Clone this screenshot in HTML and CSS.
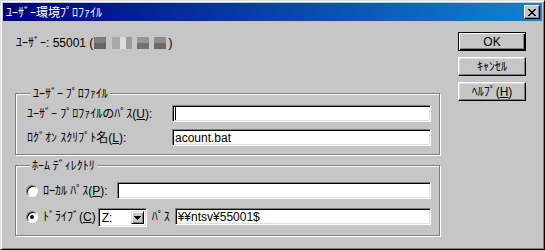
FILE: index.html
```html
<!DOCTYPE html>
<html lang="ja">
<head>
  <meta charset="UTF-8" />
  <title>ﾕｰｻﾞｰ環境ﾌﾟﾛﾌｧｲﾙ</title>
  <link rel="stylesheet" href="styles.css">
</head>
<body>
  <div class="window">
    <div class="titlebar">
      <span class="title">ﾕｰｻﾞｰ環境ﾌﾟﾛﾌｧｲﾙ</span>
      <span class="close-box">
        <svg width="8" height="7" viewBox="0 0 8 7" shape-rendering="crispEdges">
          <path d="M0 0h2v1h-2zM6 0h2v1h-2zM1 1h2v1h-2zM5 1h2v1h-2zM2 2h4v1h-4zM3 3h2v1h-2zM2 4h4v1h-4zM1 5h2v1h-2zM5 5h2v1h-2zM0 6h2v1h-2zM6 6h2v1h-2z" fill="#000"/>
        </svg>
      </span>
    </div>

    <div class="dialog">
      <div class="main">
        <div class="user-line">ﾕｰｻﾞｰ: 55001 (<span class="mask m1"></span><span class="mask m2"></span><span class="mask m3"></span><span class="mask m4"></span>)</div>

        <fieldset class="group profile">
          <legend>ﾕｰｻﾞｰ ﾌﾟﾛﾌｧｲﾙ</legend>
          <div class="row">
            <label class="label">ﾕｰｻﾞｰ ﾌﾟﾛﾌｧｲﾙのﾊﾟｽ(<u>U</u>):</label>
            <div class="field"><span class="caret"></span></div>
          </div>
          <div class="row">
            <label class="label">ﾛｸﾞｵﾝ ｽｸﾘﾌﾟﾄ名(<u>L</u>):</label>
            <div class="field">acount.bat</div>
          </div>
        </fieldset>

        <fieldset class="group home">
          <legend>ﾎｰﾑ ﾃﾞｨﾚｸﾄﾘ</legend>
          <div class="row">
            <span class="radio"></span>
            <label class="opt local-label">ﾛｰｶﾙ ﾊﾟｽ(<u>P</u>):</label>
            <div class="field"></div>
          </div>
          <div class="row">
            <span class="radio checked"></span>
            <label class="opt drive-label">ﾄﾞﾗｲﾌﾞ(<u>C</u>)</label>
            <div class="combo">
              <span class="combo-value">Z:</span>
              <span class="drop">
                <svg width="7" height="4" viewBox="0 0 7 4" shape-rendering="crispEdges">
                  <path d="M0 0h7v1h-7zM1 1h5v1h-5zM2 2h3v1h-3zM3 3h1v1h-1z" fill="#000"/>
                </svg>
              </span>
            </div>
            <label class="opt path-label">ﾊﾟｽ</label>
            <div class="field">¥¥ntsv¥55001$</div>
          </div>
        </fieldset>
      </div>

      <div class="buttons">
        <button class="btn default">OK</button>
        <button class="btn">ｷｬﾝｾﾙ</button>
        <button class="btn">ﾍﾙﾌﾟ(<u>H</u>)</button>
      </div>
    </div>
  </div>
</body>
</html>
```

FILE: styles.css
```css
body {
  margin: 0;
  font-family: "Liberation Sans", "Noto Sans CJK JP", sans-serif;
  font-size: 12px;
  line-height: 14px;
  color: #000;
  background: #c6c6c6;
}

.window {
  width: 545px;
  height: 250px;
  box-sizing: border-box;
  padding: 2px;
  background: #c6c6c6;
  border: 1px solid;
  border-color: #dfdfdf #000 #000 #dfdfdf;
  box-shadow: inset 1px 1px #fff, inset -1px -1px #808080;
}

.titlebar {
  height: 18px;
  display: flex;
  align-items: center;
  justify-content: space-between;
  padding: 0 2px 0 3px;
  background: linear-gradient(to right, #000080, #1084d0);
  color: #fff;
}

.title {
  font-family: "Noto Sans CJK JP", sans-serif;
  line-height: 14px;
}

.close-box {
  width: 16px;
  height: 14px;
  box-sizing: border-box;
  display: flex;
  align-items: center;
  justify-content: center;
  background: #c6c6c6;
  border: 1px solid;
  border-color: #fff #000 #000 #fff;
  box-shadow: inset -1px -1px #808080;
}

.dialog {
  display: flex;
}

.main {
  width: 425px;
  padding: 15px 0 0 12px;
}

.user-line {
  height: 14px;
  padding-left: 1px;
  white-space: nowrap;
}

.mask {
  display: inline-block;
  height: 12px;
  margin-right: 5px;
  vertical-align: -2px;
}

.m1 { width: 12px; margin-left: 1px; background: linear-gradient(#7e7e7e 50%, #666 50%); }
.m2 { width: 20px; margin-left: 1px; background: linear-gradient(to right, #a8a8a8 40%, #dcdcdc 40%, #dcdcdc 70%, #9c9c9c 70%); }
.m3 { width: 12px; background: linear-gradient(#969696 50%, #727272 50%); }
.m4 { width: 12px; margin-right: 2px; background: linear-gradient(#8e8e8e 50%, #6a6a6a 50%); }

.group {
  margin: 0;
  min-width: 0;
  border: 1px solid #808080;
  box-shadow: inset 1px 1px #fff, 1px 1px #fff;
}

.group legend {
  margin-left: 4px;
  padding: 0 2px;
  line-height: 14px;
  background: #c6c6c6;
  font-family: "Noto Sans CJK JP", sans-serif;
}

.profile {
  margin-top: 36px;
  padding: 5px 8px 8px 11px;
}

.home {
  margin-top: 3px;
  padding: 10px 8px 10px 10px;
}

.row {
  display: flex;
  align-items: center;
  height: 17px;
}

.profile .row + .row {
  margin-top: 7px;
}

.home .row + .row {
  margin-top: 9px;
}

.label {
  width: 145px;
  flex: none;
}

.field {
  flex: 1;
  height: 17px;
  box-sizing: border-box;
  padding: 1px 2px;
  display: flex;
  align-items: center;
  background: #fff;
  border: 1px solid;
  border-color: #808080 #fff #fff #808080;
  box-shadow: inset 1px 1px #000, inset -1px -1px #dfdfdf;
}

.caret {
  width: 1px;
  height: 13px;
  background: #000;
}

.radio {
  width: 12px;
  height: 12px;
  box-sizing: border-box;
  flex: none;
  border-radius: 50%;
  background: #fff;
  border: 1px solid;
  border-color: #808080 #fff #fff #808080;
  box-shadow: inset 1px 1px #000;
  display: flex;
  align-items: center;
  justify-content: center;
}

.radio.checked::after {
  content: "";
  width: 4px;
  height: 4px;
  border-radius: 50%;
  background: #000;
}

.opt {
  flex: none;
}

.local-label {
  margin: 0 9px 0 5px;
}

.drive-label {
  margin: 0 2px 0 5px;
}

.path-label {
  margin: 0 5px;
}

.combo {
  width: 49px;
  height: 19px;
  box-sizing: border-box;
  flex: none;
  display: flex;
  align-items: center;
  justify-content: space-between;
  padding: 2px;
  margin-top: 2px;
  background: #fff;
  border: 1px solid;
  border-color: #808080 #fff #fff #808080;
  box-shadow: inset 1px 1px #000, inset -1px -1px #dfdfdf;
}

.combo-value {
  padding-left: 1px;
}

.drop {
  width: 13px;
  height: 13px;
  box-sizing: border-box;
  display: flex;
  align-items: center;
  justify-content: center;
  background: #c6c6c6;
  border: 1px solid;
  border-color: #dfdfdf #000 #000 #dfdfdf;
  box-shadow: inset 1px 1px #fff, inset -1px -1px #808080;
}

.buttons {
  display: flex;
  flex-direction: column;
  gap: 6px;
  margin: 11px 0 0 18px;
}

.btn {
  width: 68px;
  height: 19px;
  padding: 0;
  font: inherit;
  font-family: "Liberation Sans", "Noto Sans CJK JP", sans-serif;
  color: #000;
  background: #c6c6c6;
  border: 1px solid;
  border-color: #fff #000 #000 #fff;
  box-shadow: inset -1px -1px #808080, inset 1px 1px #dfdfdf;
}

.btn.default {
  border-color: #000;
  box-shadow: inset 1px 1px #fff, inset -1px -1px #000, inset -2px -2px #808080;
}
```
